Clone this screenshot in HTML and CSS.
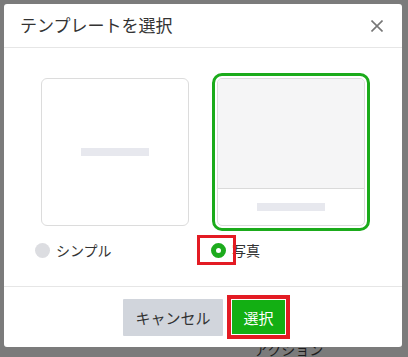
FILE: index.html
```html
<!DOCTYPE html>
<html lang="ja">
<head>
    <meta charset="UTF-8">
    <meta name="viewport" content="width=device-width, initial-scale=1.0">
    <title>テンプレートを選択</title>
    <link rel="stylesheet" href="styles.css">
</head>
<body>
    <div class="backdrop-text">アクション</div>

    <div class="modal">
        <header class="modal-header">
            <h2>テンプレートを選択</h2>
            <button class="close-btn" aria-label="閉じる">
                <svg width="12" height="12" viewBox="0 0 12 12">
                    <path d="M0.5 0.5 L11.5 11.5 M11.5 0.5 L0.5 11.5" stroke="#777" stroke-width="1.6" fill="none"/>
                </svg>
            </button>
        </header>

        <section class="modal-body">
            <div class="option">
                <div class="card">
                    <div class="card-top">
                        <span class="bar"></span>
                    </div>
                </div>
                <label class="choice">
                    <span class="radio"></span>
                    シンプル
                </label>
            </div>

            <div class="option">
                <div class="card selected">
                    <div class="card-top photo"></div>
                    <div class="card-bottom">
                        <span class="bar"></span>
                    </div>
                </div>
                <label class="choice">
                    <span class="radio checked marked"></span>
                    写真
                </label>
            </div>
        </section>

        <footer class="modal-footer">
            <button class="btn btn-cancel">キャンセル</button>
            <button class="btn btn-select">選択</button>
        </footer>
    </div>
</body>
</html>
```

FILE: styles.css
```css
body {
    margin: 0;
    padding: 4px 6px 0 4px;
    background-color: #7b7b7b;
    font-family: 'Noto Sans CJK JP', 'Noto Sans', sans-serif;
    color: #333;
    height: 357px;
    box-sizing: border-box;
    overflow: hidden;
    position: relative;
}
.backdrop-text {
    position: absolute;
    left: 254px;
    top: 341px;
    font-size: 14px;
    line-height: 16px;
    color: #1e1e1e;
}
.modal {
    position: relative;
    background: #fff;
    border-radius: 3px;
    height: 343px;
    display: flex;
    flex-direction: column;
}
.modal-header {
    height: 44px;
    box-sizing: border-box;
    display: flex;
    align-items: center;
    justify-content: space-between;
    padding: 0 19px 0 16px;
    border-bottom: 1px solid #e6e6e6;
}
.modal-header h2 {
    margin: 0;
    font-size: 17px;
    font-weight: normal;
    color: #333;
    line-height: 1;
    padding-bottom: 2px;
}
.close-btn {
    border: none;
    background: none;
    padding: 0;
    width: 12px;
    height: 12px;
    display: flex;
    cursor: pointer;
}
.modal-body {
    flex: 1;
    display: flex;
    justify-content: center;
    gap: 28px;
    padding-top: 30px;
}
.option {
    display: flex;
    flex-direction: column;
}
.card {
    width: 148px;
    height: 148px;
    box-sizing: border-box;
    border: 1px solid #dcdcdc;
    border-radius: 6px;
    display: flex;
    flex-direction: column;
    overflow: hidden;
}
.card.selected {
    outline: 3px solid #1bab1b;
    outline-offset: 2px;
    border-radius: 5px;
}
.card-top {
    flex: 1;
    display: flex;
    align-items: center;
    justify-content: center;
}
.card-top.photo {
    background: #f5f5f6;
    border-bottom: 1px solid #dadada;
}
.card-bottom {
    height: 36px;
    display: flex;
    align-items: center;
    justify-content: center;
}
.bar {
    display: block;
    width: 68px;
    height: 8px;
    background: #e7e8ee;
}
.choice {
    display: flex;
    align-items: center;
    gap: 6px;
    margin: 16px 0 0 -6px;
    font-size: 14px;
    line-height: 17px;
    color: #333;
}
.radio {
    position: relative;
    width: 15px;
    height: 15px;
    border-radius: 50%;
    background: #dcdde1;
    box-sizing: border-box;
}
.radio.checked {
    background: #fff;
    border: 5px solid #1dab1d;
}
.radio.marked::after {
    content: '';
    position: absolute;
    left: -19px;
    top: -13px;
    width: 33px;
    height: 24px;
    border: 3px solid #e31b23;
}
.modal-footer {
    height: 61px;
    box-sizing: border-box;
    border-top: 1px solid #e6e6e6;
    display: flex;
    align-items: center;
    justify-content: center;
    gap: 9px;
    padding-left: 2px;
}
.btn {
    border: none;
    font-family: inherit;
    font-size: 15px;
    cursor: pointer;
    border-radius: 1px;
}
.btn-cancel {
    width: 100px;
    height: 37px;
    background: #d1d5dc;
    color: #333;
}
.btn-select {
    width: 53px;
    height: 34px;
    background: #13af13;
    color: #fff;
    outline: 4px solid #e31b23;
    outline-offset: 1px;
    border-radius: 0;
}
```
